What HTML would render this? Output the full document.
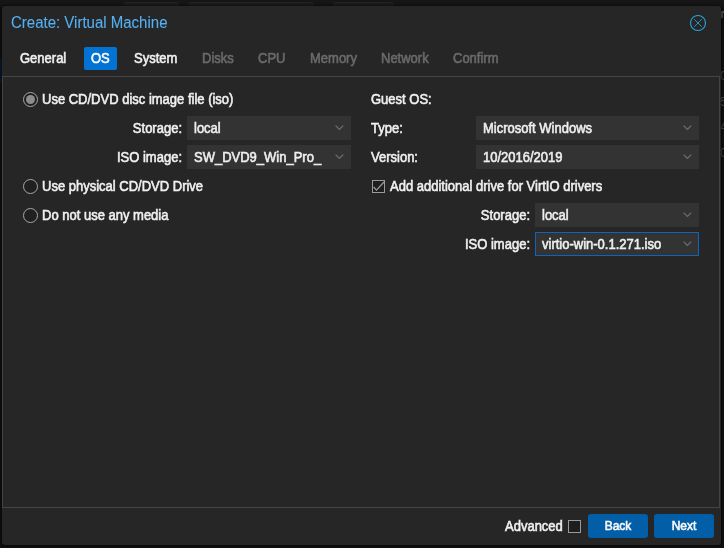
<!DOCTYPE html>
<html><head><meta charset="utf-8">
<style>
html,body{margin:0;padding:0;width:724px;height:548px;overflow:hidden;background:#101010;font-family:"Liberation Sans",sans-serif;font-size:13px;}
.abs{position:absolute;}
.t{position:absolute;white-space:nowrap;line-height:15px;color:#f0f0f0;transform:scaleY(1.07) translateZ(0);transform-origin:0 12px;-webkit-text-stroke:0.55px currentColor;}
.t.w{color:#fafafa;}
.t.btxt{font-size:12px;line-height:14px;width:60px;text-align:center;transform-origin:0 11px;}
.t.dis{color:#6a6a6a;}
.t.v{color:#efefef;}
.t.title{font-size:15px;line-height:17px;color:#55b0f2;transform:scaleY(1.07) translateZ(0);transform-origin:0 14px;-webkit-text-stroke:0.1px currentColor;}
.dlg{position:absolute;left:2px;top:6px;width:718.6px;height:538.6px;background:#262626;border-radius:3px;box-shadow:0 0 3px 1px rgba(0,0,0,.5);}
.panel{position:absolute;left:2px;top:76px;width:718px;height:432px;border:1px solid #444;box-sizing:border-box;}
.combo{position:absolute;height:24px;background:#333;box-sizing:border-box;}
.radio{position:absolute;width:15px;height:15px;border:1px solid #a8a8a8;border-radius:50%;box-sizing:border-box;background:#202020;}
.radio.on::after{content:"";position:absolute;left:2px;top:2px;width:9px;height:9px;border-radius:50%;background:#8c8c8c;}
.btn{position:absolute;top:514px;width:60px;height:24px;background:#015ea7;border-radius:3px;}
</style></head>
<body>
<div class="abs" style="left:0;top:0;width:724px;height:7px;background:#161616"></div>
<div class="abs" style="left:123px;top:2px;width:56px;height:8px;background:#1d1d1d;border-top:1px solid #242424;box-sizing:border-box;border-radius:3px"></div>
<div class="abs" style="left:188px;top:2px;width:126px;height:8px;background:#1d1d1d;border-top:1px solid #242424;box-sizing:border-box;border-radius:3px"></div>
<div class="abs" style="left:333px;top:2px;width:61px;height:8px;background:#1d1d1d;border-top:1px solid #242424;box-sizing:border-box;border-radius:3px"></div>
<div class="abs" style="left:0;top:58px;width:2px;height:24px;background:#0b1a2a"></div>
<div class="abs" style="left:721px;top:11px;width:6px;height:7px;border-top:2px solid #4a4a4a;border-left:2px solid #4a4a4a;box-sizing:border-box"></div>
<span class="abs" style="left:720px;top:68px;font-size:13px;line-height:15px;color:#474747">0</span>
<span class="abs" style="left:720px;top:94px;font-size:13px;line-height:15px;color:#474747">5</span>
<span class="abs" style="left:720px;top:119px;font-size:13px;line-height:15px;color:#474747">4</span>
<span class="abs" style="left:720px;top:145px;font-size:13px;line-height:15px;color:#474747">0</span>
<div class="dlg"></div>
<div class="panel"></div>
<span class="t title" style="left:11px;top:14px">Create: Virtual Machine</span>
<svg class="abs" style="left:690px;top:15px" width="16" height="16" viewBox="0 0 16 16"><circle cx="8" cy="8" r="7.5" fill="none" stroke="#2b9dd2" stroke-width="1.1"/><path d="M4.2 4.2L11.8 11.8M11.8 4.2L4.2 11.8" stroke="#2b9dd2" stroke-width="0.9"/></svg>
<div class="abs" style="left:84px;top:47px;width:33px;height:23px;background:#0273d2;border-radius:2px"></div>
<span class="t " style="left:20px;top:51px;">General</span>
<span class="t w" style="left:91px;top:51px;">OS</span>
<span class="t " style="left:134px;top:51px;">System</span>
<span class="t dis" style="left:202px;top:51px;">Disks</span>
<span class="t dis" style="left:258px;top:51px;">CPU</span>
<span class="t dis" style="left:310px;top:51px;">Memory</span>
<span class="t dis" style="left:381px;top:51px;">Network</span>
<span class="t dis" style="left:453px;top:51px;">Confirm</span>
<div class="radio on" style="left:23px;top:92px"></div>
<span class="t " style="left:42px;top:92px;">Use CD/DVD disc image file (iso)</span>
<span class="t " style="right:542px;top:121px">Storage:</span>
<div class="combo" style="left:187px;top:116px;width:164px;"></div>
<span class="t v" style="left:194px;top:121px;">local</span>
<svg class="abs" style="left:335px;top:125px" width="9" height="5" viewBox="0 0 9 5"><path d="M0.6 0.6L4.4 4.4L8.2 0.6" fill="none" stroke="#6c6c6c" stroke-width="1.3"/></svg>
<span class="t " style="right:542px;top:150px">ISO image:</span>
<div class="combo" style="left:187px;top:145px;width:164px;"></div>
<span class="t v" style="left:194px;top:150px;">SW_DVD9_Win_Pro_</span>
<svg class="abs" style="left:335px;top:154px" width="9" height="5" viewBox="0 0 9 5"><path d="M0.6 0.6L4.4 4.4L8.2 0.6" fill="none" stroke="#6c6c6c" stroke-width="1.3"/></svg>
<div class="radio" style="left:23px;top:179px"></div>
<span class="t " style="left:42px;top:179px;">Use physical CD/DVD Drive</span>
<div class="radio" style="left:23px;top:208px"></div>
<span class="t " style="left:42px;top:208px;">Do not use any media</span>
<span class="t " style="left:371px;top:92px;">Guest OS:</span>
<span class="t " style="left:371px;top:121px;">Type:</span>
<div class="combo" style="left:476px;top:116px;width:223px;"></div>
<span class="t v" style="left:483px;top:121px;">Microsoft Windows</span>
<svg class="abs" style="left:683px;top:125px" width="9" height="5" viewBox="0 0 9 5"><path d="M0.6 0.6L4.4 4.4L8.2 0.6" fill="none" stroke="#6c6c6c" stroke-width="1.3"/></svg>
<span class="t " style="left:371px;top:150px;">Version:</span>
<div class="combo" style="left:476px;top:145px;width:223px;"></div>
<span class="t v" style="left:483px;top:150px;">10/2016/2019</span>
<svg class="abs" style="left:683px;top:154px" width="9" height="5" viewBox="0 0 9 5"><path d="M0.6 0.6L4.4 4.4L8.2 0.6" fill="none" stroke="#6c6c6c" stroke-width="1.3"/></svg>
<div class="abs" style="left:372px;top:180px;width:13px;height:13px;border:1px solid #9a9a9a;background:#1e1e1e;box-sizing:border-box"></div>
<svg class="abs" style="left:373px;top:181px" width="11" height="11" viewBox="0 0 11 11"><path d="M0.6 6L3.5 9.1L11 1" fill="none" stroke="#9a9a9a" stroke-width="1.3"/></svg>
<span class="t " style="left:390px;top:179px;">Add additional drive for VirtIO drivers</span>
<span class="t " style="right:194px;top:208px">Storage:</span>
<div class="combo" style="left:535px;top:203px;width:164px;"></div>
<span class="t v" style="left:542px;top:208px;">local</span>
<svg class="abs" style="left:683px;top:212px" width="9" height="5" viewBox="0 0 9 5"><path d="M0.6 0.6L4.4 4.4L8.2 0.6" fill="none" stroke="#6c6c6c" stroke-width="1.3"/></svg>
<span class="t " style="right:194px;top:237px">ISO image:</span>
<div class="combo" style="left:535px;top:232px;width:164px;border:1px solid #1065b8;"></div>
<span class="t v" style="left:542px;top:237px;">virtio-win-0.1.271.iso</span>
<svg class="abs" style="left:683px;top:241px" width="9" height="5" viewBox="0 0 9 5"><path d="M0.6 0.6L4.4 4.4L8.2 0.6" fill="none" stroke="#6c6c6c" stroke-width="1.3"/></svg>
<span class="t " style="left:505px;top:519px;">Advanced</span>
<div class="abs" style="left:568px;top:520px;width:13px;height:13px;border:1px solid #9a9a9a;background:#1e1e1e;box-sizing:border-box"></div>
<div class="btn" style="left:588px"></div>
<div class="btn" style="left:654px"></div>
<span class="t w btxt" style="left:588px;top:519px">Back</span>
<span class="t w btxt" style="left:654px;top:519px">Next</span>
</body></html>
